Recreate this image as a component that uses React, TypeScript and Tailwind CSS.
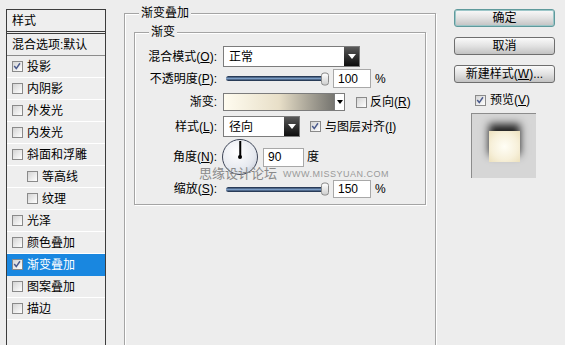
import React from "react";

const Check = ({ checked = false }: { checked?: boolean }) => (
  <span className="relative inline-block w-[11px] h-[11px] shrink-0 border border-[#8a8a8a] bg-gradient-to-br from-[#d4d4d4] to-[#ffffff]">
    {checked && (
      <svg viewBox="0 0 11 11" className="absolute left-0 top-0 w-[9px] h-[9px]">
        <path d="M1.5 5 L4 8 L8.5 1.5" stroke="#4a5a8c" strokeWidth="1.8" fill="none" />
      </svg>
    )}
  </span>
);

const DarkBtn = () => (
  <span className="w-[15px] h-full flex items-center justify-center bg-gradient-to-b from-[#5a5a5a] to-[#0e0e0e]">
    <svg viewBox="0 0 8 6" className="w-[8px] h-[6px]">
      <path d="M0 0 H8 L4 5 Z" fill="#fff" />
    </svg>
  </span>
);

const Slider = ({ thumb }: { thumb: number }) => (
  <div className="relative w-[107px] h-full flex items-center">
    <div className="ml-[3px] w-[98px] h-[5px] rounded-full bg-gradient-to-b from-[#17263f] via-[#7b9cc4] to-[#17263f]" />
    <div
      className="absolute top-1/2 -translate-y-1/2 w-[8px] h-[13px] rounded-[3px] border border-[#8a8a8a] bg-gradient-to-b from-[#ffffff] to-[#cfcfcf]"
      style={{ left: thumb }}
    />
  </div>
);

const Field = ({ v, w }: { v: string; w: string }) => (
  <div className={`${w} h-full border border-[#a8a8a8] bg-white pl-[4px] flex items-center text-[12px] leading-none`}>{v}</div>
);

const rows: { t: string; c?: boolean; indent?: boolean; sel?: boolean }[] = [
  { t: "投影", c: true },
  { t: "内阴影" },
  { t: "外发光" },
  { t: "内发光" },
  { t: "斜面和浮雕" },
  { t: "等高线", indent: true },
  { t: "纹理", indent: true },
  { t: "光泽" },
  { t: "颜色叠加" },
  { t: "渐变叠加", c: true, sel: true },
  { t: "图案叠加" },
  { t: "描边" },
];

const Label = ({ children }: { children: React.ReactNode }) => (
  <div className="w-[83px] pr-[1px] text-right shrink-0 text-[12px] leading-none">{children}</div>
);

const Btn = ({ t, def = false }: { t: React.ReactNode; def?: boolean }) => (
  <div
    className={`w-[101px] h-[18px] rounded-[3px] border flex items-center justify-center text-[12px] leading-none bg-gradient-to-b from-[#fafafa] via-[#e2e2e2] to-[#c2c2c2] ${
      def ? "border-[#5f9a9c] shadow-[inset_0_0_0_1px_#9cc6c8]" : "border-[#6e6e6e]"
    }`}
  >
    {t}
  </div>
);

export default function App() {
  return (
    <div
      className="w-[565px] h-[345px] bg-[#ededed] flex items-start overflow-hidden relative text-black"
      style={{ fontFamily: '"Liberation Sans","Noto Sans CJK SC",sans-serif' }}
    >
      {/* left list */}
      <div className="ml-[6px] mt-[9px] w-[100px] h-[340px] border-x border-t border-[#3c3c3c] bg-[#eeeeee] shrink-0 text-[12px]">
        <div className="h-[21px] pl-[5px] flex items-center leading-none">样式</div>
        <div className="h-[3px] border-y border-[#3c3c3c]" />
        <div className="h-[22px] pl-[5px] flex items-center leading-none border-b border-[#8c8c8c]">混合选项:默认</div>
        {rows.map((r) => (
          <div
            key={r.t}
            className={`h-[22px] flex items-center gap-[4px] leading-none border-b ${
              r.sel ? "bg-[#1987e0] text-white border-[#1987e0]" : "border-white"
            } ${r.indent ? "pl-[20px]" : "pl-[5px]"}`}
          >
            <Check checked={r.c} />
            <span>{r.t}</span>
          </div>
        ))}
      </div>

      {/* main group */}
      <div className="relative ml-[18px] mt-[13px] w-[312px] h-[340px] shrink-0 border border-[#a4a4a4] shadow-[inset_1px_1px_0_#ffffff,1px_1px_0_#ffffff] pt-[18px] pl-[9px]">
        <span className="absolute -top-[8px] left-[14px] px-[2px] bg-[#ededed] text-[12px] leading-[15px]">渐变叠加</span>
        <div className="relative w-[292px] border border-[#a4a4a4] shadow-[inset_1px_1px_0_#ffffff,1px_1px_0_#ffffff] pb-[6px]">
          <span className="absolute -top-[8px] left-[14px] px-[2px] bg-[#ededed] text-[12px] leading-[15px]">渐变</span>

          {/* row1 */}
          <div className="mt-[13px] h-[21px] flex items-center">
            <Label>混合模式(<u>O</u>):</Label>
            <div className="ml-[5px] w-[137px] h-full border border-[#7c7c7c] bg-white flex items-center">
              <span className="flex-1 pl-[5px] text-[12px] leading-none">正常</span>
              <DarkBtn />
            </div>
          </div>

          {/* row2 */}
          <div className="mt-[2px] h-[19px] flex items-center">
            <Label>不透明度(<u>P</u>):</Label>
            <div className="ml-[5px] h-full flex items-center">
              <Slider thumb={98} />
              <div className="ml-[3px] h-full flex">
                <Field v="100" w="w-[38px]" />
              </div>
              <span className="ml-[4px] text-[12px] leading-none">%</span>
            </div>
          </div>

          {/* row3 */}
          <div className="mt-[5px] h-[18px] flex items-center">
            <Label>渐变:</Label>
            <div className="ml-[5px] w-[122px] h-full border border-[#7c7c7c] bg-white flex">
              <div className="flex-1 bg-gradient-to-r from-[#fffcf0] via-[#e8dfc8] to-[#767570]" />
              <div className="w-[10px] border-l border-[#7c7c7c] bg-white flex items-center justify-center">
                <svg viewBox="0 0 6 4" className="w-[6px] h-[4px]">
                  <path d="M0 0 H6 L3 4 Z" fill="#000" />
                </svg>
              </div>
            </div>
            <div className="ml-[11px] flex items-center gap-[3px] text-[12px] leading-none">
              <Check />
              <span>
                反向(<u>R</u>)
              </span>
            </div>
          </div>

          {/* row4 */}
          <div className="mt-[5px] h-[21px] flex items-center">
            <Label>样式(<u>L</u>):</Label>
            <div className="ml-[5px] w-[77px] h-full border border-[#7c7c7c] bg-white flex items-center">
              <span className="flex-1 pl-[5px] text-[12px] leading-none">径向</span>
              <DarkBtn />
            </div>
            <div className="ml-[10px] flex items-center gap-[4px] text-[12px] leading-none">
              <Check checked />
              <span>
                与图层对齐(<u>I</u>)
              </span>
            </div>
          </div>

          {/* row5 */}
          <div className="mt-[2px] h-[36px] flex items-center">
            <Label>角度(<u>N</u>):</Label>
            <div className="ml-[4px] w-[36px] h-[36px] rounded-full border-[1.5px] border-[#3e4658] bg-[radial-gradient(circle_at_40%_35%,#ffffff,#e6e9ef_60%,#b8c0cf)] relative">
              <div className="absolute left-1/2 top-[1px] w-[1.5px] h-[16px] -translate-x-1/2 bg-black" />
              <div className="absolute left-1/2 top-1/2 w-[4px] h-[4px] -translate-x-1/2 -translate-y-1/2 rounded-full bg-black" />
            </div>
            <div className="ml-[5px] h-[19px] flex">
              <Field v="90" w="w-[41px]" />
            </div>
            <span className="ml-[3px] text-[12px] leading-none">度</span>
          </div>

          {/* row6 */}
          <div className="mt-[5px] h-[18px] flex items-center">
            <Label>缩放(<u>S</u>):</Label>
            <div className="ml-[5px] h-full flex items-center">
              <Slider thumb={98} />
              <div className="ml-[3px] h-full flex">
                <Field v="150" w="w-[38px]" />
              </div>
              <span className="ml-[4px] text-[12px] leading-none">%</span>
            </div>
          </div>

          {/* watermark overlay */}
          <div className="absolute left-[64px] top-[134px] flex items-end gap-[6px] pointer-events-none">
            <span className="text-[13px] leading-none text-[#8a8a8a]">思缘设计论坛</span>
            <span className="text-[9px] leading-none text-[#9a9a9a] tracking-[0.5px] mb-[1px]">WWW.MISSYUAN.COM</span>
          </div>
        </div>
      </div>

      {/* right column */}
      <div className="ml-[18px] mt-[9px] w-[101px] shrink-0 flex flex-col">
        <Btn t="确定" def />
        <div className="mt-[10px]">
          <Btn t="取消" />
        </div>
        <div className="mt-[10px]">
          <Btn
            t={
              <span>
                新建样式(<u>W</u>)...
              </span>
            }
          />
        </div>
        <div className="mt-[11px] ml-[21px] h-[12px] flex items-center gap-[4px] text-[12px] leading-none">
          <Check checked />
          <span>
            预览(<u>V</u>)
          </span>
        </div>
        <div className="mt-[7px] ml-[17px] w-[65px] h-[65px] bg-[#d6d6d6] border-l border-t border-[#8c8c8c] flex items-center justify-center">
          <div className="w-[31px] h-[31px] bg-[radial-gradient(circle,#fffef6,#f7f0da_60%,#ece0bc)] shadow-[0_-7px_8px_rgba(0,0,0,0.85)]" />
        </div>
      </div>
    </div>
  );
}
